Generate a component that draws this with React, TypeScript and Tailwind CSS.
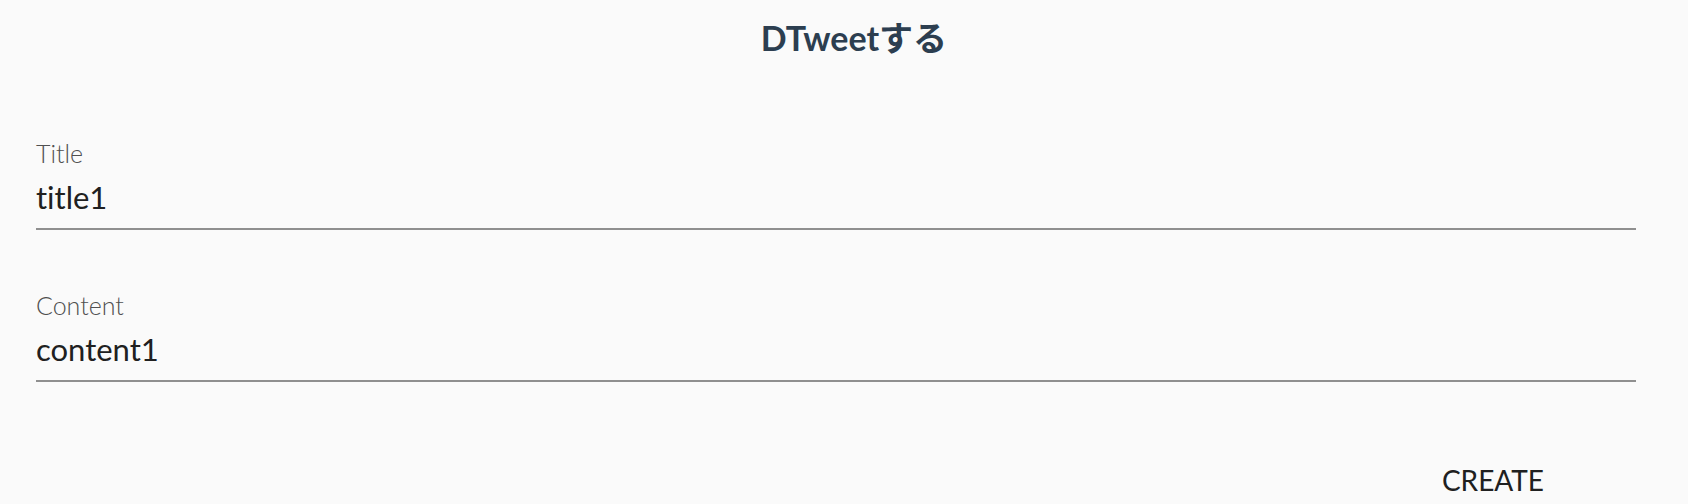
import { useState } from "react";

type FieldProps = { id: string; label: string; value: string; onChange: (value: string) => void };

function Field({ id, label, value, onChange }: FieldProps) {
  return (
    <div className="flex flex-col">
      <label htmlFor={id} className="text-[25px] leading-8 font-light text-[#505050]">{label}</label>
      <input
        id={id}
        value={value}
        onChange={(e) => onChange(e.target.value)}
        className="h-[61px] w-full border-b-2 border-[#8f8f8f] bg-transparent pb-1 text-[31px] text-[#202020] outline-none"
      />
    </div>
  );
}

export default function App() {
  const [title, setTitle] = useState("title1");
  const [content, setContent] = useState("content1");
  return (
    <main className="min-h-screen bg-[#fafafa] font-['Lato','Noto_Sans_CJK_JP',sans-serif] [font-variant-ligatures:none]">
      <h1 className="pt-3.5 pl-5 text-center text-[34px] leading-[48px] font-bold text-[#2c3e50]">DTweetする</h1>
      <form className="flex flex-col gap-[59px] pt-[75px] pr-[52px] pl-9" onSubmit={(e) => e.preventDefault()}>
        <Field id="title" label="Title" value={title} onChange={setTitle} />
        <Field id="content" label="Content" value={content} onChange={setContent} />
        <div className="flex justify-end pt-4 pr-[92px]">
          <button type="submit" className="text-[28px] leading-[46px] text-[#202020]">CREATE</button>
        </div>
      </form>
    </main>
  );
}
